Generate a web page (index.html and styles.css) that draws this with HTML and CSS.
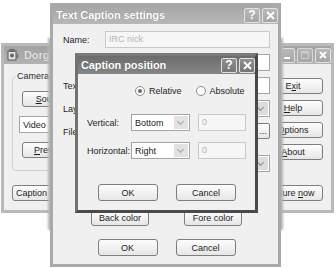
FILE: index.html
```html
<!DOCTYPE html>
<html>
	<head>
		<meta charset="utf-8">
		<title>Dorgem - Caption position</title>
		<link rel="stylesheet" href="styles.css">
	</head>
	<body>
		<div class="desktop">

			<!-- main window, at the back -->
			<div class="win win_dorgem">
				<div class="titlebar">
					<svg class="app_icon" width="12" height="12" viewBox="0 0 12 12">
						<rect x="1" y="2" width="8" height="9" fill="#e4e4e4" stroke="#555" stroke-width="1"/>
						<rect x="3" y="0.5" width="4" height="2" fill="#888" stroke="#555" stroke-width="0.8"/>
						<circle cx="5" cy="6.5" r="2" fill="#666"/>
						<rect x="9" y="5" width="2.5" height="4" fill="#777"/>
					</svg>
					<span class="title_text">Dorgem</span>
					<div class="ctrls">
						<span class="ctrl"><svg width="8" height="8" viewBox="0 0 8 8"><rect x="1" y="6" width="6" height="2" fill="#fff"/></svg></span>
						<span class="ctrl ctrl_off"><svg width="8" height="8" viewBox="0 0 8 8"><rect x="0.5" y="0.5" width="7" height="7" fill="none" stroke="#d4d4d4" stroke-width="1"/><rect x="0.5" y="0.5" width="7" height="2" fill="#d4d4d4"/></svg></span>
						<span class="ctrl"><svg width="8" height="8" viewBox="0 0 8 8"><path d="M1 1L7 7M7 1L1 7" stroke="#fff" stroke-width="1.8"/></svg></span>
					</div>
				</div>
				<div class="win_body dorgem_body">
					<div class="dorgem_left">
						<fieldset class="group">
							<legend>Camera</legend>
							<button class="btn btn_src"><span><u>S</u>ource</span></button>
							<div class="select select_video"><span>Video</span><i class="arrow"></i></div>
							<button class="btn btn_src"><span><u>P</u>review</span></button>
						</fieldset>
						<button class="btn btn_caption"><span>Caption settings</span></button>
					</div>
					<div class="dorgem_right">
						<button class="btn btn_side"><span>E<u>x</u>it</span></button>
						<button class="btn btn_side"><span><u>H</u>elp</span></button>
						<button class="btn btn_side"><span><u>O</u>ptions</span></button>
						<button class="btn btn_side"><span><u>A</u>bout</span></button>
						<button class="btn btn_side btn_capture"><span>Capture <u>n</u>ow</span></button>
					</div>
				</div>
			</div>

			<!-- caption settings window -->
			<div class="shade"></div>
			<div class="win win_settings">
				<div class="titlebar">
					<span class="title_text">Text Caption settings</span>
					<div class="ctrls">
						<span class="ctrl ctrl_help">?</span>
						<span class="ctrl"><svg width="9" height="9" viewBox="0 0 9 9"><path d="M1 1L8 8M8 1L1 8" stroke="#fff" stroke-width="1.8"/></svg></span>
					</div>
				</div>
				<div class="win_body settings_body">
					<div class="form_row">
						<label>Name:</label>
						<div class="field field_off">IRC nick</div>
					</div>
					<div class="form_row">
						<label></label>
						<div class="field"></div>
					</div>
					<div class="form_row">
						<label>Text:</label>
						<div class="field"></div>
					</div>
					<div class="form_row">
						<label>Layout:</label>
						<div class="select"><span></span><i class="arrow"></i></div>
					</div>
					<div class="form_row row_file">
						<label>File:</label>
						<div class="field_pair">
							<div class="field"></div>
							<button class="btn btn_browse">...</button>
						</div>
					</div>
					<div class="form_row">
						<label></label>
						<div class="select"><span></span><i class="arrow"></i></div>
					</div>
					<div class="color_row">
						<button class="btn btn_color">Back color</button>
						<button class="btn btn_color">Fore color</button>
					</div>
					<div class="button_row">
						<button class="btn btn_dlg">OK</button>
						<button class="btn btn_dlg">Cancel</button>
					</div>
				</div>
			</div>

			<!-- caption position dialog, in front -->
			<div class="win win_position">
				<div class="titlebar">
					<span class="title_text">Caption position</span>
					<div class="ctrls">
						<span class="ctrl ctrl_help">?</span>
						<span class="ctrl"><svg width="9" height="9" viewBox="0 0 9 9"><path d="M1 1L8 8M8 1L1 8" stroke="#fff" stroke-width="1.8"/></svg></span>
					</div>
				</div>
				<div class="win_body position_body">
					<div class="radio_row">
						<span class="radio radio_on"></span><span>Relative</span>
						<span class="radio radio_gap"></span><span>Absolute</span>
					</div>
					<div class="pos_row row_vert">
						<label>Vertical:</label>
						<div class="select select_pos"><span>Bottom</span><i class="arrow arrow_off"></i></div>
						<div class="field field_off field_num">0</div>
					</div>
					<div class="pos_row row_horiz">
						<label>Horizontal:</label>
						<div class="select select_pos"><span>Right</span><i class="arrow arrow_off"></i></div>
						<div class="field field_off field_num">0</div>
					</div>
					<div class="button_row">
						<button class="btn btn_dlg">OK</button>
						<button class="btn btn_dlg">Cancel</button>
					</div>
				</div>
			</div>

		</div>
	</body>
</html>
```

FILE: styles.css
```css
*{
	margin:0;
	padding:0;
	box-sizing:border-box;
}

body{
	background:#fff;
	font-family:"Liberation Sans", Arial, sans-serif;
	font-size:9px;
	color:#1c1c1c;
}

.desktop{
	position:relative;
	width:336px;
	height:268px;
	overflow:hidden;
}

/* windows */
.win{
	position:absolute;
	display:flex;
	flex-direction:column;
	background:#f0f0f0;
	border:3px solid #b3b3b3;
}

.win_dorgem{
	left:1px;
	top:43px;
	width:333px;
	height:170px;
	border-color:#b9b9b9;
}

.win_settings{
	left:50px;
	top:3px;
	width:231px;
	height:264px;
	border-color:#a9a9a9;
}

.win_position{
	left:75px;
	top:53px;
	width:183px;
	height:160px;
	border-color:#7a7a7a #4a4a4a #4a4a4a #727272;
}

.shade{
	position:absolute;
	left:48px;
	top:38px;
	width:235px;
	height:192px;
	background:#b4b4b4;
	filter:blur(1px);
}

.titlebar{
	display:flex;
	align-items:center;
	height:18px;
	padding:0 0 0 3px;
	background:linear-gradient(#a6a6a6, #b8b8b8);
	color:#fff;
	font-weight:bold;
	font-size:11px;
	flex:none;
}

.win_dorgem .titlebar{
	background:linear-gradient(#a3a3a3, #b3b3b3);
	color:#e6e6e6;
}

.win_position .titlebar{
	background:linear-gradient(#6c6c6c, #868686);
}

.title_text{
	text-shadow:0 0 1px rgba(0,0,0,0.35);
	letter-spacing:-0.1px;
}

.app_icon{
	margin-right:5px;
}

.ctrls{
	display:flex;
	gap:2px;
	margin-left:auto;
}

.ctrl{
	display:flex;
	align-items:center;
	justify-content:center;
	width:16px;
	height:15px;
	border:1px solid #e2e2e2;
	border-radius:2px;
	background:linear-gradient(#b9b9b9, #a6a6a6);
	color:#fff;
	font-size:12px;
	font-weight:bold;
}

.win_position .ctrl{
	background:linear-gradient(#8e8e8e, #777);
}

.ctrl_off{
	opacity:0.8;
}

.win_body{
	flex:1;
}

/* controls */
.btn{
	display:flex;
	align-items:center;
	justify-content:center;
	height:16px;
	border:1px solid #7e7e7e;
	border-radius:3px;
	background:linear-gradient(#fdfdfd, #e6e6e6);
	font:inherit;
	color:#1c1c1c;
	white-space:nowrap;
	overflow:hidden;
	flex:none;
}

.field{
	height:17px;
	border:1px solid #a5a5a5;
	background:#fff;
	padding:2px 3px;
}

.field_off{
	border-color:#c9c9c9;
	background:#f6f6f6;
	color:#b4b4b4;
}

.select{
	display:flex;
	align-items:center;
	height:17px;
	border:1px solid #a5a5a5;
	background:#fff;
	padding:0 1px 0 3px;
}

.select span{
	flex:1;
}

.arrow{
	width:14px;
	height:13px;
	background:#dcdcdc;
	position:relative;
}

.arrow::after{
	content:"";
	position:absolute;
	left:4px;
	top:3px;
	width:4px;
	height:4px;
	border-right:1.5px solid #8a8a8a;
	border-bottom:1.5px solid #8a8a8a;
	transform:rotate(45deg);
}

.arrow_off{
	background:#e2e2e2;
}

.arrow_off::after{
	border-color:#a4a4a4;
}

/* dorgem */
.dorgem_body{
	display:flex;
	justify-content:space-between;
	padding:7px 8px 9px 8px;
}

.dorgem_left{
	display:flex;
	flex-direction:column;
	width:120px;
}

.group{
	height:100px;
	border:1px solid #cfcfcf;
	border-radius:4px;
	padding:10px 0 0 9px;
	display:flex;
	flex-direction:column;
	align-items:flex-start;
}

.group legend{
	padding:0 2px 0 1px;
	margin-left:-6px;
	color:#2a2a2a;
}

.btn_src{
	width:56px;
}

.select_video{
	width:96px;
	margin:9px 0 9px -3px;
}

.btn_caption{
	width:84px;
	margin-top:auto;
	justify-content:flex-start;
	padding-left:3px;
}

.dorgem_right{
	display:flex;
	flex-direction:column;
	gap:6px;
	width:60px;
	padding-top:7px;
}

.btn_side{
	width:60px;
}

.btn_capture{
	margin-top:auto;
	width:68px;
	margin-left:-8px;
}

/* caption settings */
.settings_body{
	display:flex;
	flex-direction:column;
	padding:7px 8px 0 10px;
}

.form_row{
	display:grid;
	grid-template-columns:42px 165px;
	align-items:center;
	margin-bottom:6px;
}

.row_file{
	margin-bottom:15px;
}

.field_pair{
	display:flex;
	gap:3px;
}

.field_pair .field{
	flex:1;
}

.btn_browse{
	width:14px;
	height:16px;
	border-radius:2px;
}

.color_row{
	display:flex;
	justify-content:center;
	gap:35px;
	margin-top:32px;
}

.btn_color{
	width:58px;
}

.button_row{
	display:flex;
	justify-content:center;
	gap:18px;
	margin-top:13px;
}

.btn_dlg{
	width:60px;
	height:17px;
}

/* caption position */
.position_body{
	display:flex;
	flex-direction:column;
	padding:10px 8px 0 9px;
}

.radio_row{
	display:flex;
	align-items:center;
	gap:4px;
	padding-left:48px;
	height:14px;
}

.radio{
	width:10px;
	height:10px;
	border:1px solid #8c8c8c;
	border-radius:50%;
	background:#fff;
	position:relative;
	flex:none;
}

.radio_on::after{
	content:"";
	position:absolute;
	left:2px;
	top:2px;
	width:4px;
	height:4px;
	border-radius:50%;
	background:#6a6a6a;
}

.radio_gap{
	margin-left:10px;
}

.pos_row{
	display:flex;
	align-items:center;
}

.row_vert{
	margin-top:16px;
}

.row_horiz{
	margin-top:11px;
}

.pos_row label{
	width:44px;
	flex:none;
}

.select_pos{
	width:59px;
}

.field_num{
	width:48px;
	margin-left:8px;
}

.position_body .button_row{
	margin-top:25px;
}
```
